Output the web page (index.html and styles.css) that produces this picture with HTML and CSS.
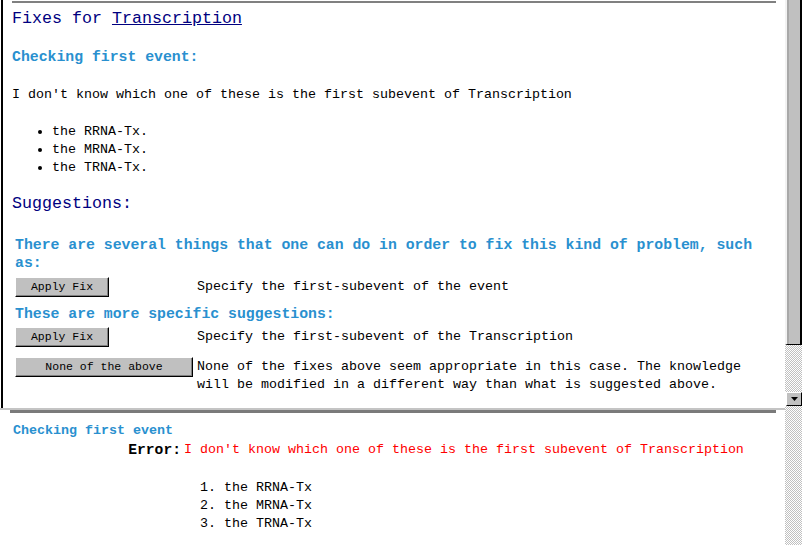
FILE: index.html
```html
<!DOCTYPE html>
<html>
<head>
<meta charset="utf-8">
<title>Fixes for Transcription</title>
<link rel="stylesheet" href="styles.css">
</head>
<body>
<div class="screen">
  <div class="frames">
    <div class="top-frame">
      <div class="rule"></div>
      <h1 class="title">Fixes for <a href="#">Transcription</a></h1>
      <h2 class="check">Checking first event:</h2>
      <p class="msg">I don't know which one of these is the first subevent of Transcription</p>
      <ul class="cands">
        <li>the RRNA-Tx.</li>
        <li>the MRNA-Tx.</li>
        <li>the TRNA-Tx.</li>
      </ul>
      <h2 class="sugg">Suggestions:</h2>
      <div class="fixes">
        <p class="intro">There are several things that one can do in order to fix this kind of problem, such as:</p>
        <div class="fix-row r1">
          <button class="btn">Apply Fix</button>
          <span class="fix-text">Specify the first-subevent of the event</span>
        </div>
        <p class="intro specific">These are more specific suggestions:</p>
        <div class="fix-row r2">
          <button class="btn">Apply Fix</button>
          <span class="fix-text">Specify the first-subevent of the Transcription</span>
        </div>
        <div class="fix-row r3">
          <button class="btn wide">None of the above</button>
          <span class="fix-text">None of the fixes above seem appropriate in this case. The knowledge will be modified in a different way than what is suggested above.</span>
        </div>
      </div>
    </div>
    <div class="divider-light"></div>
    <div class="divider-dark"></div>
    <div class="bottom-frame">
      <div class="b-check">Checking first event</div>
      <div class="err-row">
        <span class="err-label">Error:</span>
        <span class="err-text">I don't know which one of these is the first subevent of Transcription</span>
      </div>
      <ol class="b-list">
        <li>the RRNA-Tx</li>
        <li>the MRNA-Tx</li>
        <li>the TRNA-Tx</li>
      </ol>
    </div>
  </div>
  <div class="scrollbar">
    <div class="thumb"></div>
    <div class="track"></div>
    <div class="arrow">
      <svg width="7" height="4" viewBox="0 0 7 4"><polygon points="0,0 7,0 3.5,4" fill="#000"/></svg>
    </div>
    <div class="track rest"></div>
  </div>
</div>
</body>
</html>
```

FILE: styles.css
```css
* { box-sizing: border-box; }

html, body {
  margin: 0;
  padding: 0;
  background: #fff;
}

body {
  font-family: "Liberation Mono", "DejaVu Sans Mono", monospace;
  font-size: 13.33px;
  color: #000;
}

.screen {
  display: flex;
  width: 802px;
  height: 545px;
  overflow: hidden;
}

.frames {
  width: 785px;
  display: flex;
  flex-direction: column;
}

.top-frame {
  height: 408px;
  margin-left: 1px;
  border-left: 2px solid #000;
  padding: 1px 9px 0 9px;
  overflow: hidden;
}

.rule {
  height: 2px;
  background: #808080;
}

.title {
  margin: 6px 0 0;
  font-size: 16.67px;
  line-height: 20px;
  font-weight: normal;
  color: #000080;
}

.title a {
  color: #000080;
  text-decoration: underline;
}

.check {
  margin: 19px 0 0;
  font-size: 14.8px;
  line-height: 18px;
  font-weight: bold;
  color: #2990cf;
}

.msg {
  margin: 20px 0 0;
  line-height: 18px;
}

.cands {
  margin: 19px 0 0;
  padding-left: 40px;
  line-height: 18px;
}

.sugg {
  margin: 17px 0 0;
  font-size: 16.67px;
  line-height: 20px;
  font-weight: normal;
  color: #000080;
}

.fixes {
  margin-top: 22px;
  padding-left: 3px;
}

.intro {
  margin: 0;
  font-size: 14.8px;
  line-height: 18px;
  font-weight: bold;
  color: #2990cf;
}

.specific {
  margin-top: 8px;
}

.fix-row {
  display: grid;
  grid-template-columns: 182px 1fr;
  align-items: start;
  line-height: 18px;
}

.fix-text {
  padding-top: 1px;
}

.r1 { margin-top: 5px; }
.r2 { margin-top: 4px; }
.r3 { margin-top: 10px; }

.btn {
  width: 94px;
  height: 20px;
  padding: 0 0 2px;
  font-family: "Liberation Mono", "DejaVu Sans Mono", monospace;
  font-size: 11.5px;
  color: #000;
  background: #c0c0c0;
  border: 1px solid;
  border-color: #fff #000 #000 #fff;
  box-shadow: inset -1px -1px 0 #808080;
}

.btn.wide {
  width: 178px;
}

.divider-light {
  height: 2px;
  background: #c4c4c4;
}

.divider-dark {
  height: 3px;
  width: 766px;
  margin-left: 10px;
  background: #7a7a7a;
}

.bottom-frame {
  flex: 1;
  padding: 10px 0 0 13px;
}

.b-check {
  font-weight: bold;
  line-height: 16px;
  color: #2990cf;
}

.err-row {
  display: grid;
  grid-template-columns: 171px 1fr;
  margin-top: 2px;
  line-height: 18px;
}

.err-label {
  text-align: right;
  padding-right: 3px;
  font-weight: bold;
  font-size: 14.67px;
}

.err-text {
  color: #ff0000;
}

.b-list {
  margin: 20px 0 0;
  padding-left: 211px;
  line-height: 18px;
}

.scrollbar {
  width: 17px;
  display: flex;
  flex-direction: column;
}

.thumb {
  height: 345px;
  flex: none;
  background: #c0c0c0;
  border-left: 2px solid #f2f2f2;
  border-right: 2px solid #000;
  border-bottom: 1px solid #000;
  box-shadow: inset 2px 0 0 #a8a8a8;
}

.track {
  height: 47px;
  flex: none;
  background-image: repeating-conic-gradient(#c0c0c0 0 25%, #fff 0 50%);
  background-size: 2px 2px;
}

.track.rest {
  flex: 1;
  height: auto;
}

.arrow {
  height: 14px;
  flex: none;
  margin-left: 1px;
  background: #c0c0c0;
  border: 1px solid;
  border-color: #fff #000 #000 #fff;
  display: flex;
  align-items: center;
  justify-content: center;
}

.arrow svg {
  display: block;
}
```
